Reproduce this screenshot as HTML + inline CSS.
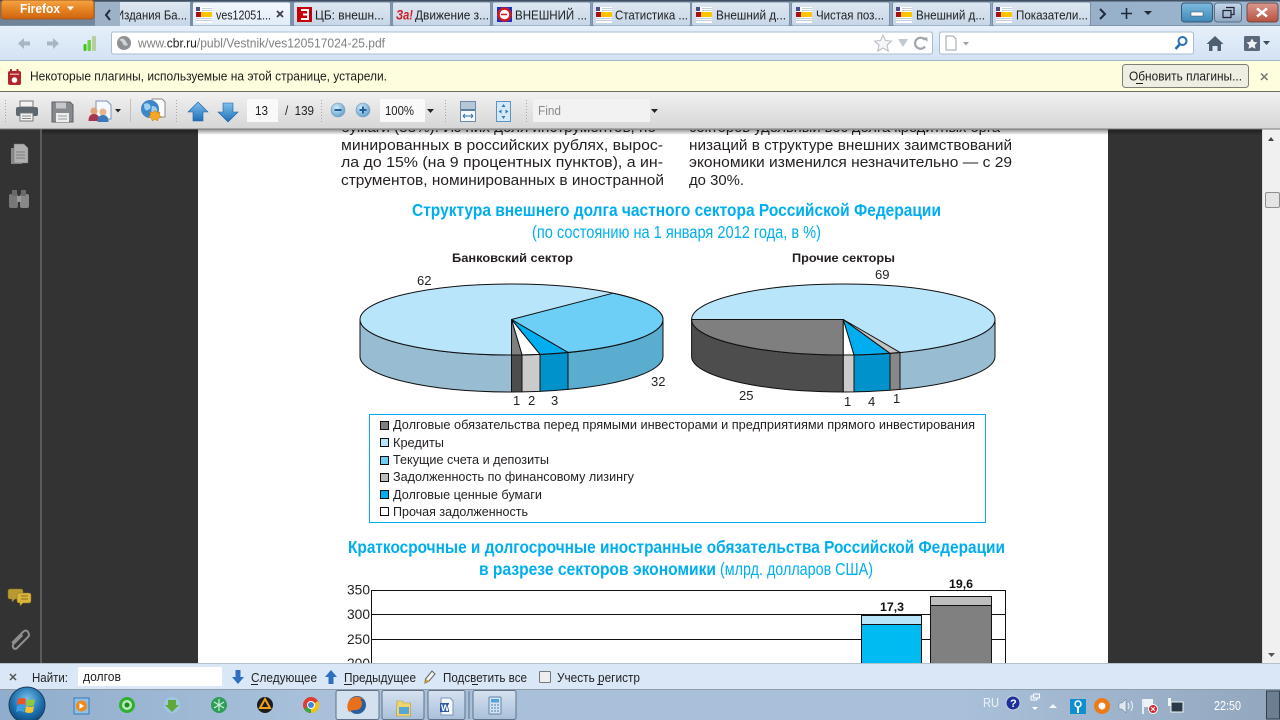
<!DOCTYPE html>
<html lang="ru"><head><meta charset="utf-8"><title>ves120517024-25.pdf</title>
<style>
html,body{margin:0;padding:0;width:1280px;height:720px;overflow:hidden;background:#333}
svg{display:block;position:absolute;left:0;top:0}
text{font-family:"Liberation Sans","Noto Sans CJK SC",sans-serif;white-space:pre}
.t{font-size:13px;fill:#222}
.b{font-size:14.500px;fill:#231f20}
.l{font-size:12.500px;fill:#231f20}
.h{font-size:17.500px;font-weight:bold;fill:#00aeef}
.s{font-size:17.500px;fill:#00aeef}
.p{font-size:13px;fill:#231f20}
.f{font-size:13px;fill:#222}
</style></head><body>
<svg width="1280" height="720" viewBox="0 0 1280 720" xmlns="http://www.w3.org/2000/svg">
<defs>
<linearGradient id="gTab" x1="0" y1="0" x2="0" y2="1"><stop offset="0" stop-color="#dfe8f2"/><stop offset="1" stop-color="#c6d6e7"/></linearGradient>
<linearGradient id="gTabA" x1="0" y1="0" x2="0" y2="1"><stop offset="0" stop-color="#f3f8fd"/><stop offset="1" stop-color="#e0ecf8"/></linearGradient>
<linearGradient id="gBar" x1="0" y1="0" x2="1" y2="0"><stop offset="0" stop-color="#6f8399"/><stop offset=".5" stop-color="#8aa2bb"/><stop offset="1" stop-color="#9db6cf"/></linearGradient>
<linearGradient id="gFx" x1="0" y1="0" x2="0" y2="1"><stop offset="0" stop-color="#f6a545"/><stop offset=".5" stop-color="#e58222"/><stop offset="1" stop-color="#cf6410"/></linearGradient>
<linearGradient id="gNav" x1="0" y1="0" x2="0" y2="1"><stop offset="0" stop-color="#e6f0fa"/><stop offset="1" stop-color="#d3e2f3"/></linearGradient>
<linearGradient id="gPdf" x1="0" y1="0" x2="0" y2="1"><stop offset="0" stop-color="#f1f1f1"/><stop offset="1" stop-color="#d6d6d6"/></linearGradient>
<linearGradient id="gShadow" x1="0" y1="0" x2="0" y2="1"><stop offset="0" stop-color="#000" stop-opacity=".45"/><stop offset="1" stop-color="#000" stop-opacity="0"/></linearGradient>
<linearGradient id="gTask" x1="0" y1="0" x2="1" y2="0"><stop offset="0" stop-color="#8fadcc"/><stop offset=".24" stop-color="#a8c0da"/><stop offset=".75" stop-color="#a9c0da"/><stop offset="1" stop-color="#92a7bd"/></linearGradient>
<linearGradient id="gBtn" x1="0" y1="0" x2="0" y2="1"><stop offset="0" stop-color="#d6e2ef"/><stop offset="1" stop-color="#a9c0da"/></linearGradient>
<linearGradient id="gArrow" x1="0" y1="0" x2="0" y2="1"><stop offset="0" stop-color="#7cc0ee"/><stop offset="1" stop-color="#1f6fb8"/></linearGradient>
<linearGradient id="gMin" x1="0" y1="0" x2="0" y2="1"><stop offset="0" stop-color="#7dbbe0"/><stop offset="1" stop-color="#3d88b8"/></linearGradient>
<linearGradient id="gRest" x1="0" y1="0" x2="0" y2="1"><stop offset="0" stop-color="#c6d8ea"/><stop offset="1" stop-color="#90a9c2"/></linearGradient>
<linearGradient id="gClose" x1="0" y1="0" x2="0" y2="1"><stop offset="0" stop-color="#d9998e"/><stop offset="1" stop-color="#b8503f"/></linearGradient>
<radialGradient id="gOrb" cx=".5" cy=".35" r=".7"><stop offset="0" stop-color="#7ac3ea"/><stop offset=".6" stop-color="#1c6fae"/><stop offset="1" stop-color="#0b3f70"/></radialGradient>
<radialGradient id="gZ" cx=".4" cy=".35" r=".7"><stop offset="0" stop-color="#d6ecfa"/><stop offset="1" stop-color="#5d9cc9"/></radialGradient>
<g id="doc">
<rect x="0" y="0" width="16" height="16" fill="#fff"/>
<rect x="0" y="0" width="4" height="4" fill="#4a4a8c"/>
<rect x="0" y="5" width="5" height="5" fill="#a80f16"/>
<rect x="5" y="5" width="11" height="5" fill="#fdc400"/>
<path d="M6 1.500h10M6 3.500h10M0 11.500h16M0 13.500h16" stroke="#c6d0da" stroke-width="1"/>
</g>
<clipPath id="pageClip"><rect x="198" y="130" width="910" height="533"/></clipPath>
<clipPath id="tabClip"><rect x="120" y="0" width="72" height="26"/></clipPath>
</defs>

<!-- tab bar -->
<rect x="0" y="0" width="1280" height="26" fill="url(#gBar)"/>
<rect x="0" y="0" width="1280" height="1.500" fill="#3f4f60"/>
<rect x="0" y="25" width="1280" height="1" fill="#7e93a8"/>

<rect x="1" y="0" width="93" height="19" rx="3" fill="url(#gFx)" stroke="#9f5a1c"/>
<text x="20" y="13" textLength="40" lengthAdjust="spacingAndGlyphs" style="font-size:12.500px;font-weight:bold;fill:#fff">Firefox</text>
<path d="M67 6.500h7l-3.500 4z" fill="#fff"/>

<rect x="95" y="2" width="25" height="24" fill="#9db2c7"/>
<path d="M110 10l-4 5 4 5" fill="none" stroke="#1d2b3a" stroke-width="2"/>

<rect x="120" y="2" width="71" height="24" fill="url(#gTab)"/>
<path d="M190.500 2v24" stroke="#7b91a7"/>
<text x="116" y="19.500" textLength="71" lengthAdjust="spacingAndGlyphs" class="t" clip-path="url(#tabClip)">Издания Ба...</text>

<path d="M192.500 26V4q0-2 2-2h94q2 0 2 2v22z" fill="url(#gTabA)" stroke="#7b91a7"/>
<use href="#doc" x="196" y="7"/>
<text x="216" y="19.500" textLength="55" lengthAdjust="spacingAndGlyphs" class="t">ves12051...</text>
<path d="M277 11l6 6m0-6l-6 6" stroke="#3a3f45" stroke-width="1.800"/>

<g stroke="#7b91a7" fill="url(#gTab)">
<rect x="293.500" y="2" width="97" height="24" rx="2"/>
<rect x="392.500" y="2" width="98" height="24" rx="2"/>
<rect x="492.500" y="2" width="98" height="24" rx="2"/>
<rect x="592.500" y="2" width="98" height="24" rx="2"/>
<rect x="691.500" y="2" width="98" height="24" rx="2"/>
<rect x="791.500" y="2" width="98" height="24" rx="2"/>
<rect x="892.500" y="2" width="98" height="24" rx="2"/>
<rect x="992.500" y="2" width="98" height="24" rx="2"/>
</g>
<rect x="297" y="7" width="15" height="15" fill="#c60006"/>
<path d="M301 10h7v9h-7m2-4.500h5" fill="none" stroke="#fff" stroke-width="2"/>
<text x="315" y="19.500" textLength="69" lengthAdjust="spacingAndGlyphs" class="t">ЦБ: внешн...</text>
<text x="396" y="19.500" textLength="17" lengthAdjust="spacingAndGlyphs" style="font-size:14px;font-style:italic;font-weight:bold;fill:#d21f26">За!</text>
<text x="415" y="19.500" textLength="74" lengthAdjust="spacingAndGlyphs" class="t">Движение з...</text>
<rect x="497" y="7" width="15" height="15" fill="#1733c8"/>
<circle cx="504.500" cy="14.500" r="6" fill="#fff" stroke="#d0181e" stroke-width="2.500"/>
<path d="M501 14.500h6" stroke="#d0181e" stroke-width="1.500"/>
<text x="515" y="19.500" textLength="72" lengthAdjust="spacingAndGlyphs" class="t">ВНЕШНИЙ ...</text>
<use href="#doc" x="596" y="7"/>
<text x="615" y="19.500" textLength="73" lengthAdjust="spacingAndGlyphs" class="t">Статистика ...</text>
<use href="#doc" x="696" y="7"/>
<text x="716" y="19.500" textLength="70" lengthAdjust="spacingAndGlyphs" class="t">Внешний д...</text>
<use href="#doc" x="796" y="7"/>
<text x="816" y="19.500" textLength="68" lengthAdjust="spacingAndGlyphs" class="t">Чистая поз...</text>
<use href="#doc" x="896" y="7"/>
<text x="916" y="19.500" textLength="69" lengthAdjust="spacingAndGlyphs" class="t">Внешний д...</text>
<use href="#doc" x="996" y="7"/>
<text x="1016" y="19.500" textLength="72" lengthAdjust="spacingAndGlyphs" class="t">Показатели...</text>

<path d="M1100 9l5 5-5 5" fill="none" stroke="#1d2b3a" stroke-width="2"/>
<path d="M1121 13.500h11m-5.500-5.500v11" stroke="#1d2b3a" stroke-width="1.600"/>
<path d="M1144 11h8l-4 4z" fill="#1d2b3a"/>

<rect x="1181.500" y="3" width="31" height="19" rx="3" fill="url(#gMin)" stroke="#3d566f"/>
<rect x="1191" y="12" width="12" height="4" fill="#fff" stroke="#345" stroke-width=".5"/>
<rect x="1214.500" y="3" width="27" height="19" rx="3" fill="url(#gRest)" stroke="#5a7086"/>
<path d="M1226 7.500h8v7h-3M1223 10.500h8v7h-8z" fill="none" stroke="#223" stroke-width="1.200"/>
<rect x="1247" y="3" width="31" height="19" rx="3" fill="url(#gClose)" stroke="#6f4a45"/>
<path d="M1257 8.500l10 8m0-8l-10 8" stroke="#fff" stroke-width="2.500"/>

<!-- nav bar -->
<rect x="0" y="26" width="1280" height="35" fill="url(#gNav)"/>
<rect x="0" y="60" width="1280" height="1" fill="#9fb6cc"/>
<path d="M24 38l-6 5.500 6 5.500v-3.500h6v-4h-6z" fill="#a9b5c0"/>
<path d="M53 38l6 5.500-6 5.500v-3.500h-6v-4h6z" fill="#a9b5c0"/>
<rect x="83.500" y="44" width="3" height="7" rx="1" fill="#3fc81a"/>
<rect x="87.500" y="40" width="3.500" height="11" rx="1" fill="#6fd040"/>
<rect x="92" y="36" width="4" height="15" rx="1" fill="#b8cda0"/>

<rect x="111.500" y="32" width="821" height="22" rx="2" fill="#fff" stroke="#a8bdd2"/>
<circle cx="124" cy="43" r="7" fill="#8c8f93"/>
<path d="M119 40q4-3 6 0t3 5q-4 2-5-1t-4-4z" fill="#d1d3d5"/>
<text x="138" y="47.500" textLength="247" lengthAdjust="spacingAndGlyphs" style="font-size:13px;fill:#808080">www.<tspan fill="#222">cbr.ru</tspan>/publ/Vestnik/ves120517024-25.pdf</text>
<path d="M883 35l2.500 5.500 6 .6-4.500 4 1.300 6-5.300-3.100-5.300 3.100 1.300-6-4.500-4 6-.6z" fill="#f4f6f8" stroke="#b7bdc3"/>
<path d="M898 39h10l-5 8z" fill="#c2c9d0"/>
<path d="M925 40a5.500 5.500 0 1 0 0 6.500" fill="none" stroke="#a0a6ad" stroke-width="2.200"/>
<path d="M923 37.500h4.500v4.500z" fill="#a0a6ad"/>
<rect x="939.500" y="32" width="254" height="22" rx="2" fill="#fff" stroke="#a8bdd2"/>
<path d="M946 36h7l3 3v11h-10z" fill="#fff" stroke="#9aa3ad"/>
<path d="M963 42h6l-3 3.500z" fill="#9aa3ad"/>
<circle cx="1182.500" cy="41" r="4" fill="none" stroke="#2a6fb6" stroke-width="2"/>
<path d="M1180 44l-4.500 5" stroke="#2a6fb6" stroke-width="2.500"/>
<path d="M1215 36l-8.500 8h2.500v7h3.500v-5h5v5h3.500v-7h2.500z" fill="#4e5f70"/>
<rect x="1244" y="36" width="16" height="15" rx="1.500" fill="#59687a"/>
<path d="M1252 38.500l1.800 3.400 3.700.5-2.700 2.600.7 3.800-3.500-1.800-3.500 1.800.7-3.800-2.700-2.600 3.700-.5z" fill="#f0f3f6"/>
<path d="M1263 41h7l-3.500 4z" fill="#3d4a58"/>

<!-- notification -->
<rect x="0" y="61" width="1280" height="31" fill="#fefedf"/>
<rect x="0" y="91" width="1280" height="1" fill="#6e6e62"/>
<rect x="8" y="71" width="13" height="14" rx="2" fill="#b2262a"/>
<rect x="10" y="69" width="2" height="3" fill="#b2262a"/><rect x="16.500" y="69" width="2" height="3" fill="#b2262a"/>
<circle cx="14.500" cy="80" r="2.800" fill="#fff"/>
<rect x="10" y="73.500" width="9" height="1.500" fill="#e7a2a3"/>
<text x="30" y="80.500" textLength="357" lengthAdjust="spacingAndGlyphs" class="t" style="fill:#1c1c1c">Некоторые плагины, используемые на этой странице, устарели.</text>
<rect x="1122.500" y="64.500" width="126" height="23" rx="3" fill="#eeeee2" stroke="#7f7f78"/>
<text x="1129" y="80.500" textLength="113" lengthAdjust="spacingAndGlyphs" class="t" style="fill:#1c1c1c">Обновить плагины...</text>
<rect x="1136" y="83" width="7" height="1" fill="#1c1c1c"/>
<path d="M1261 73.500l6.500 6.500m0-6.500l-6.500 6.500" stroke="#777" stroke-width="1.500"/>

<!-- dark background + page -->
<rect x="0" y="129" width="1262" height="534" fill="#333"/>
<rect x="40" y="129" width="2" height="534" fill="#5b5b5b"/>
<rect x="198" y="129" width="910" height="534" fill="#fff"/>

<!-- body text -->
<g clip-path="url(#pageClip)">
<text class="b" x="341" y="132" textLength="320" lengthAdjust="spacingAndGlyphs">бумаги (88%). Из них доля инструментов, но-</text>
<text class="b" x="341" y="150" textLength="322" lengthAdjust="spacingAndGlyphs">минированных в российских рублях, вырос-</text>
<text class="b" x="341" y="167" textLength="322" lengthAdjust="spacingAndGlyphs">ла до 15% (на 9 процентных пунктов), а ин-</text>
<text class="b" x="341" y="185" textLength="323" lengthAdjust="spacingAndGlyphs">струментов, номинированных в иностранной</text>
<text class="b" x="689" y="132" textLength="316" lengthAdjust="spacingAndGlyphs">секторов удельный вес долга кредитных орга-</text>
<text class="b" x="689" y="150" textLength="323" lengthAdjust="spacingAndGlyphs">низаций в структуре внешних заимствований</text>
<text class="b" x="689" y="167" textLength="323" lengthAdjust="spacingAndGlyphs">экономики изменился незначительно — с 29</text>
<text class="b" x="689" y="185" textLength="55" lengthAdjust="spacingAndGlyphs">до 30%.</text>

<text class="h" x="412" y="216" textLength="529" lengthAdjust="spacingAndGlyphs">Структура внешнего долга частного сектора Российской Федерации</text>
<text class="s" x="532" y="238" textLength="289" lengthAdjust="spacingAndGlyphs">(по состоянию на 1 января 2012 года, в %)</text>

<text x="452" y="262" textLength="121" lengthAdjust="spacingAndGlyphs" style="font-size:12px;font-weight:bold;fill:#231f20">Банковский сектор</text>
<text x="792" y="262" textLength="103" lengthAdjust="spacingAndGlyphs" style="font-size:12px;font-weight:bold;fill:#231f20">Прочие секторы</text>

<!-- left pie -->
<g stroke="#111" stroke-width="1" stroke-linejoin="round">
<path d="M360 319.500A151.500 35.500 0 0 0 511.500 355v37A151.500 35.500 0 0 1 360 356.500z" fill="#98bdd2"/>
<path d="M511.500 355A151.500 35.500 0 0 0 522 354.900v37l-10.500.1z" fill="#4d4d4d"/>
<path d="M522 354.900L540 354.400v37L522 391.900z" fill="#cbcbcb"/>
<path d="M540 354.400A151.500 35.500 0 0 0 568 352.400v37A151.500 35.500 0 0 1 540 391.400z" fill="#0093cb"/>
<path d="M568 352.400A151.500 35.500 0 0 0 663 319.500v37A151.500 35.500 0 0 1 568 389.400z" fill="#5badd0"/>
<ellipse cx="511.500" cy="319.500" rx="151.500" ry="35.500" fill="#b9e5fb"/>
<path d="M511.500 319.500L613 293.200A151.500 35.500 0 0 1 663 319.500 151.500 35.500 0 0 1 568 352.400z" fill="#6dcff6"/>
<path d="M511.500 319.500L568 352.400A151.500 35.500 0 0 1 540 354.400z" fill="#00aeef"/>
<path d="M511.500 319.500L540 354.400 522 354.900z" fill="#fff"/>
<path d="M511.500 319.500L522 354.900 511.500 355z" fill="#7f7f7f"/>
</g>
<!-- right pie -->
<g stroke="#111" stroke-width="1" stroke-linejoin="round">
<path d="M691.600 319.500A151.700 35.500 0 0 0 843.300 355v37A151.700 35.500 0 0 1 691.600 356.500z" fill="#4d4d4d"/>
<path d="M843.300 355L854 354.900v37l-10.700.1z" fill="#cbcbcb"/>
<path d="M854 354.900A151.700 35.500 0 0 0 890 353.300v37A151.700 35.500 0 0 1 854 391.900z" fill="#0093cb"/>
<path d="M890 353.300L900 352.400v37L890 390.300z" fill="#888"/>
<path d="M900 352.400A151.700 35.500 0 0 0 995 319.500v37A151.700 35.500 0 0 1 900 389.400z" fill="#98bdd2"/>
<ellipse cx="843.300" cy="319.500" rx="151.700" ry="35.500" fill="#b9e5fb"/>
<path d="M843.300 319.500L691.600 319.500A151.700 35.500 0 0 0 843.300 355z" fill="#7f7f7f"/>
<path d="M843.300 319.500L843.300 355 854 354.900z" fill="#fff"/>
<path d="M843.300 319.500L854 354.900A151.700 35.500 0 0 0 890 353.300z" fill="#00aeef"/>
<path d="M843.300 319.500L890 353.300 900 352.400z" fill="#c4c4c4"/>
</g>
<text class="p" x="417" y="285">62</text>
<text class="p" x="651" y="386">32</text>
<text class="p" x="513" y="405">1</text>
<text class="p" x="528" y="405">2</text>
<text class="p" x="551" y="405">3</text>
<text class="p" x="875" y="279">69</text>
<text class="p" x="739" y="400">25</text>
<text class="p" x="844" y="406">1</text>
<text class="p" x="868" y="406">4</text>
<text class="p" x="893" y="403">1</text>

<!-- legend -->
<rect x="369.500" y="414.500" width="616" height="108" fill="#fff" stroke="#00aeef"/>
<g stroke="#111" stroke-width="1">
<rect x="380.500" y="421.500" width="8" height="8" fill="#7f7f7f"/>
<rect x="380.500" y="438.500" width="8" height="8" fill="#b9e5fb"/>
<rect x="380.500" y="456.500" width="8" height="8" fill="#6dcff6"/>
<rect x="380.500" y="473.500" width="8" height="8" fill="#bdbdbd"/>
<rect x="380.500" y="490.500" width="8" height="8" fill="#00aeef"/>
<rect x="380.500" y="507.500" width="8" height="8" fill="#fff"/>
</g>
<text class="l" x="393" y="429" textLength="582" lengthAdjust="spacingAndGlyphs">Долговые обязательства перед прямыми инвесторами и предприятиями прямого инвестирования</text>
<text class="l" x="393" y="447" textLength="51" lengthAdjust="spacingAndGlyphs">Кредиты</text>
<text class="l" x="393" y="464" textLength="156" lengthAdjust="spacingAndGlyphs">Текущие счета и депозиты</text>
<text class="l" x="393" y="481" textLength="241" lengthAdjust="spacingAndGlyphs">Задолженность по финансовому лизингу</text>
<text class="l" x="393" y="499" textLength="149" lengthAdjust="spacingAndGlyphs">Долговые ценные бумаги</text>
<text class="l" x="393" y="516" textLength="135" lengthAdjust="spacingAndGlyphs">Прочая задолженность</text>

<!-- second chart -->
<text class="h" x="348" y="553" textLength="657" lengthAdjust="spacingAndGlyphs">Краткосрочные и долгосрочные иностранные обязательства Российской Федерации</text>
<text class="h" x="479" y="575" textLength="237" lengthAdjust="spacingAndGlyphs">в разрезе секторов экономики</text>
<text class="s" x="720" y="575" textLength="153" lengthAdjust="spacingAndGlyphs">(млрд. долларов США)</text>

<text style="font-size:13.500px;fill:#231f20" x="347" y="594.500" textLength="23" lengthAdjust="spacingAndGlyphs">350</text>
<text style="font-size:13.500px;fill:#231f20" x="347" y="619" textLength="23" lengthAdjust="spacingAndGlyphs">300</text>
<text style="font-size:13.500px;fill:#231f20" x="347" y="644" textLength="23" lengthAdjust="spacingAndGlyphs">250</text>
<text style="font-size:13.500px;fill:#231f20" x="347" y="668" textLength="23" lengthAdjust="spacingAndGlyphs">200</text>
<path d="M371.500 664V590.500H1005.500V664M371 614.500H1005M371 639.500H1005" fill="none" stroke="#111" stroke-width="1"/>
<rect x="861.500" y="615.500" width="60" height="9" fill="#b9e5fb" stroke="#111"/>
<rect x="861.500" y="624.500" width="60" height="42" fill="#00bbf2" stroke="#111"/>
<rect x="930.500" y="596.500" width="61" height="9" fill="#bdbdbd" stroke="#111"/>
<rect x="930.500" y="605.500" width="61" height="60" fill="#808080" stroke="#111"/>
<text x="880" y="611" textLength="24" lengthAdjust="spacingAndGlyphs" style="font-size:12px;font-weight:bold;fill:#111">17,3</text>
<text x="949" y="588" textLength="24" lengthAdjust="spacingAndGlyphs" style="font-size:12px;font-weight:bold;fill:#111">19,6</text>
</g>

<rect x="42" y="129" width="1220" height="6" fill="url(#gShadow)"/>

<!-- sidebar icons -->
<path d="M11 148h11v16H11z" fill="#8a8a8a"/>
<path d="M14 144h10l4 4v15H14z" fill="#b0b0b0" stroke="#6f6f6f" stroke-width=".5"/>
<path d="M16 152h9M16 155h9M16 158h9" stroke="#7d7d7d"/>
<rect x="9" y="194" width="9" height="14" rx="2" fill="#777"/><rect x="20" y="194" width="9" height="14" rx="2" fill="#888"/>
<rect x="12" y="190" width="5" height="6" fill="#6a6a6a"/><rect x="21" y="190" width="5" height="6" fill="#6a6a6a"/>
<rect x="17" y="196" width="4" height="6" fill="#999"/>
<path d="M10 589h11q2 0 2 2v6q0 2-2 2h-6l-3 3v-3h-2q-2 0-2-2v-6q0-2 2-2z" fill="#b89a33" stroke="#8a7120" stroke-width=".5"/>
<path d="M19 593h10q2 0 2 2v6q0 2-2 2h-6l-3 3v-3h-1q-2 0-2-2v-6q0-2 2-2z" fill="#d9b53c" stroke="#8a7120" stroke-width=".5"/>
<path d="M21 596h7M21 599h7" stroke="#8a7120"/>
<path d="M12 643l11-11q3-3 5 0t0 5l-11 11q-2 2-3.500 0t0-4l9-9" fill="none" stroke="#8f8f8f" stroke-width="2"/>

<!-- scrollbar -->
<rect x="1262" y="129" width="18" height="534" fill="#f0f0f0"/>
<rect x="1262" y="129" width="1" height="534" fill="#dcdcdc"/>
<path d="M1268 141l3-4 3 4z" fill="#444"/>
<rect x="1265.500" y="192.500" width="14" height="15" rx="1.500" fill="#e4e4e4" stroke="#8f8f8f"/>
<path d="M1268 653h7l-3.500 4z" fill="#555"/>

<!-- pdf toolbar -->
<rect x="0" y="92" width="1280" height="37" fill="url(#gPdf)"/>
<rect x="0" y="128.500" width="1280" height="1" fill="#7a7a7a"/>
<g stroke="#aaa" stroke-dasharray="1 2">
<path d="M5.500 100v22M176.500 100v22M321.500 100v22M445.500 100v22M526.500 100v22"/>
</g>
<rect x="130" y="99" width="1" height="23" fill="#c0c0c0"/>
<!-- printer -->
<rect x="20" y="101" width="13" height="6" fill="#f3f3f3" stroke="#777"/>
<rect x="16" y="107" width="22" height="9" rx="2" fill="#5c6770"/>
<rect x="20" y="113" width="13" height="8" fill="#f3f3f3" stroke="#777"/>
<path d="M22 116h9M22 118.500h9" stroke="#888"/>
<!-- save -->
<path d="M52 102h18l3 3v17H52z" fill="#86898d" stroke="#5e6165"/>
<rect x="56" y="102.500" width="10" height="6" fill="#c6c8cb"/>
<rect x="56" y="113" width="13" height="9" fill="#eceded"/>
<path d="M58 116h9M58 119h9" stroke="#9a9a9a"/>
<!-- people -->
<path d="M96 101h11l4 4v14H96z" fill="#f5f8fd" stroke="#7d92b4"/>
<circle cx="94" cy="111" r="3.500" fill="#e0a278"/>
<path d="M88.500 121q0-7 5.500-7t5.500 7z" fill="#a8354f"/>
<circle cx="103" cy="112" r="3.500" fill="#e8b48a"/>
<path d="M97.500 122q0-7 5.500-7t5.500 7z" fill="#3b79bd"/>
<path d="M115 109h6l-3 3.500z" fill="#222"/>
<!-- globe doc -->
<path d="M152 99h10l3 3v15h-13z" fill="#fbfbfb" stroke="#8a8a8a"/>
<circle cx="150" cy="109" r="9" fill="#3f86c8"/>
<path d="M144 104q4-2 6 1t-2 5-4-6zM152 106q4 0 5 3t-3 4-2-7z" fill="#9fd0ef"/>
<path d="M155 110l2 2.500 3-.5-.5 3 2 2.500-3 .5-1 3-2.500-1.800-2.700 1.800-.8-3-3-.6 2-2.400-.6-3 3 .4z" fill="#f3a826" stroke="#c77f10" stroke-width=".5"/>
<!-- up/down -->
<path d="M198 102l10 10h-5v9h-10v-9h-5z" fill="url(#gArrow)" stroke="#1c5f9d" stroke-width=".6"/>
<path d="M228 122l10-10h-5v-9h-10v9h-5z" fill="url(#gArrow)" stroke="#1c5f9d" stroke-width=".6"/>
<rect x="247" y="99" width="31" height="23" fill="#f9f9f9"/>
<text x="255" y="115" textLength="13" lengthAdjust="spacingAndGlyphs" class="t">13</text>
<text x="285" y="115" textLength="29" lengthAdjust="spacingAndGlyphs" class="t">/  139</text>
<circle cx="338" cy="110" r="7" fill="url(#gZ)" stroke="#7f9fb9" stroke-width=".6"/>
<rect x="334.500" y="109" width="7" height="2" fill="#1e5f99"/>
<circle cx="363" cy="110" r="7" fill="url(#gZ)" stroke="#7f9fb9" stroke-width=".6"/>
<path d="M359.500 110h7M363 106.500v7" stroke="#1e5f99" stroke-width="2"/>
<rect x="380" y="99" width="45" height="23" fill="#f9f9f9"/>
<text x="385" y="115" textLength="29" lengthAdjust="spacingAndGlyphs" class="t">100%</text>
<path d="M427 109h7l-3.500 4z" fill="#222"/>
<!-- fit icons -->
<rect x="460.500" y="101.500" width="15" height="20" fill="#f4f7fb" stroke="#6f8aa8"/>
<rect x="461" y="102" width="14" height="7" fill="#b7c6d6"/>
<rect x="461" y="109" width="14" height="2" fill="#5d7fa6"/>
<path d="M463 116h10M463 116l2-2M463 116l2 2M473 116l-2-2M473 116l-2 2" stroke="#2d6eae"/>
<rect x="496.500" y="101.500" width="14" height="20" fill="#d5e8f8" stroke="#5e92c4"/>
<path d="M503.500 104l-2 3h4zM503.500 119l-2-3h4zM498.500 111.500l3-2v4zM508.500 111.500l-3-2v4z" fill="#2d7ebd"/>
<!-- find -->
<rect x="533" y="99" width="117" height="23" fill="#f2f2f2"/>
<text x="538" y="115" textLength="23" lengthAdjust="spacingAndGlyphs" style="font-size:13px;fill:#8a8a8a">Find</text>
<path d="M651 109h7l-3.500 4z" fill="#222"/>

<!-- find bar -->
<rect x="0" y="663" width="1280" height="27" fill="#d9e7f6"/>
<rect x="0" y="663" width="1280" height="1" fill="#b3c0cc"/>
<rect x="0" y="689.500" width="1280" height="1" fill="#45525f"/>
<path d="M10 674l6 6m0-6l-6 6" stroke="#555" stroke-width="1.500"/>
<text x="32" y="682" textLength="36" lengthAdjust="spacingAndGlyphs" class="f">Найти:</text>
<rect x="78" y="667" width="144" height="19" rx="1" fill="#fff"/>
<text x="83" y="681" textLength="38" lengthAdjust="spacingAndGlyphs" class="f">долгов</text>
<path d="M238 670h-2.500v7H232l6 7 6-7h-3.500v-7z" fill="#2f6fc0"/>
<text x="251" y="682" textLength="66" lengthAdjust="spacingAndGlyphs" class="f">Следующее</text><rect x="251" y="684" width="7" height="1" fill="#222"/>
<path d="M331 670l-6 7h3.500v7h5v-7h3.500z" fill="#2f6fc0"/>
<text x="344" y="682" textLength="72" lengthAdjust="spacingAndGlyphs" class="f">Предыдущее</text><rect x="344" y="684" width="8" height="1" fill="#222"/>
<path d="M432 671l3 3-6 7-4 2 .5-4z" fill="#f3f3f3" stroke="#666"/>
<path d="M425 683l1-4 3 2z" fill="#d8a118"/>
<text x="443" y="682" textLength="84" lengthAdjust="spacingAndGlyphs" class="f">Подсветить все</text><rect x="472" y="684" width="6" height="1" fill="#222"/>
<rect x="539.500" y="671.500" width="11" height="11" rx="1" fill="#eee" stroke="#777"/>
<text x="557" y="682" textLength="83" lengthAdjust="spacingAndGlyphs" class="f">Учесть регистр</text><rect x="597" y="684" width="6" height="1" fill="#222"/>

<!-- taskbar -->
<rect x="0" y="690" width="1280" height="30" fill="url(#gTask)"/>
<rect x="336" y="690.500" width="43" height="29" rx="2" fill="#d3e0ee" stroke="#5f7289"/>
<rect x="382" y="690.500" width="42" height="29" rx="2" fill="url(#gBtn)" stroke="#5f7289"/>
<rect x="428" y="690.500" width="37" height="29" rx="2" fill="url(#gBtn)" stroke="#5f7289"/>
<rect x="473" y="690.500" width="43" height="29" rx="2" fill="url(#gBtn)" stroke="#5f7289"/>
<rect x="468.500" y="691" width="1" height="28" fill="#5f7289"/>

<circle cx="27" cy="705" r="18" fill="url(#gOrb)" stroke="#1d3c5c"/>
<path d="M18 699q4-2 8 0l-1 6q-4-2-8 0z" fill="#e8552d"/>
<path d="M27 699q4 2 8 0l-1 6q-4 2-8 0z" fill="#8fc93c"/>
<path d="M17 706q4-2 8 0l-1 6q-4-2-8 0z" fill="#3aa0e0"/>
<path d="M26 706q4 2 8 0l-1 6q-4 2-8 0z" fill="#f5c42e"/>

<rect x="74" y="698" width="15" height="16" fill="#8fc1e8" stroke="#3a78b5"/>
<circle cx="81.500" cy="706" r="5.500" fill="#f08a1c"/><path d="M79.500 703v6l4.500-3z" fill="#fff"/>
<circle cx="127" cy="705" r="8" fill="#2fb12f"/><circle cx="127" cy="705" r="5" fill="#bde8bd"/><circle cx="127" cy="705" r="2.500" fill="#1e8c1e"/>
<circle cx="172" cy="705" r="8" fill="#9dc9e0"/><path d="M168 700h8v5h3l-7 7-7-7h3z" fill="#62a838"/>
<circle cx="219" cy="705" r="8" fill="#2f9c58"/><path d="M219 699v12M214 702l10 6M224 702l-10 6" stroke="#c8f0d6" stroke-width="1.200"/>
<circle cx="265" cy="705" r="8" fill="#1c1c1c"/><path d="M265 699l5 9h-10z" fill="none" stroke="#f1a21c" stroke-width="2"/>
<circle cx="311" cy="705" r="8" fill="#e03c30"/>
<path d="M311 705l-7 4a8 8 0 0 0 7 4z" fill="#3aa545"/><path d="M311 705v8a8 8 0 0 0 7-12z" fill="#f3c21a"/>
<circle cx="311" cy="705" r="3.500" fill="#3f86d8" stroke="#fff"/>

<circle cx="357" cy="705" r="9" fill="#2b5f9e"/>
<path d="M349 712a9.500 9.500 0 1 1 16-11q-2-3-5-2 3 3 1.500 7t-6 4q-4 0-6.500 2z" fill="#e8701c"/>
<path d="M397 701h5l1.500 2h7v13h-14z" fill="#f0d56c" stroke="#b5973f" stroke-width=".6"/>
<rect x="399" y="707" width="10" height="7" fill="#58a6d6"/>
<path d="M441 698h9l3 3v14h-12z" fill="#f3f7fc" stroke="#7d95b4"/>
<rect x="440" y="703" width="9" height="9" fill="#2c5aa8"/><text x="441" y="711" style="font-size:9px;font-weight:bold;fill:#fff">W</text>
<rect x="489" y="697" width="12" height="17" rx="1" fill="#d5e4f2" stroke="#5e83a8"/>
<rect x="491" y="699" width="8" height="3.500" fill="#54a2d8"/>
<path d="M491 705h2M494 705h2M497 705h2M491 708h2M494 708h2M497 708h2M491 711h2M494 711h2M497 711h2" stroke="#4f78a0"/>

<text x="983" y="707" textLength="16" lengthAdjust="spacingAndGlyphs" style="font-size:13px;fill:#eef3f8">RU</text>
<circle cx="1013" cy="703" r="7" fill="#1d2f9e" stroke="#c7d2dc"/>
<text x="1010" y="707" style="font-size:11px;font-weight:bold;fill:#fff">?</text>
<rect x="1031" y="696" width="6" height="4" fill="none" stroke="#fff"/><rect x="1033.500" y="694" width="6" height="4" fill="#a9c0da" stroke="#fff"/>
<path d="M1032 707h6l-3 3z" fill="#fff"/>
<path d="M1049 708l4-4 4 4z" fill="#f4f6f8"/>
<rect x="1070" y="699" width="16" height="15" fill="#0f8fd0"/>
<circle cx="1078" cy="704" r="3" fill="none" stroke="#fff" stroke-width="1.500"/><rect x="1077" y="707" width="2" height="6" fill="#fff"/>
<circle cx="1102" cy="706" r="8" fill="#ec7a18"/><circle cx="1102" cy="706" r="3.500" fill="#fff"/>
<path d="M1119 703h3l4-4v14l-4-4h-3z" fill="#dfe7ef" stroke="#66798d" stroke-width=".5"/>
<path d="M1128 703q2 3 0 6M1131 701q3 5 0 10" fill="none" stroke="#eef3f8"/>
<path d="M1143 699v15" stroke="#fff" stroke-width="1.500"/>
<path d="M1144 699h9v8h-9z" fill="#eef3f8"/>
<circle cx="1153" cy="709" r="4.500" fill="#d8232a" stroke="#fff"/>
<path d="M1151 707l4 4m0-4l-4 4" stroke="#fff"/>
<rect x="1171" y="702" width="12" height="10" fill="#2a3a48" stroke="#eef3f8"/>
<path d="M1168 698h3v8h-3z" fill="#eef3f8"/>
<text x="1214" y="710" textLength="27" lengthAdjust="spacingAndGlyphs" style="font-size:13px;fill:#fff">22:50</text>
<rect x="1266.500" y="691" width="13" height="28" fill="#6b7e92" stroke="#33404d"/>
</svg>
</body></html>
